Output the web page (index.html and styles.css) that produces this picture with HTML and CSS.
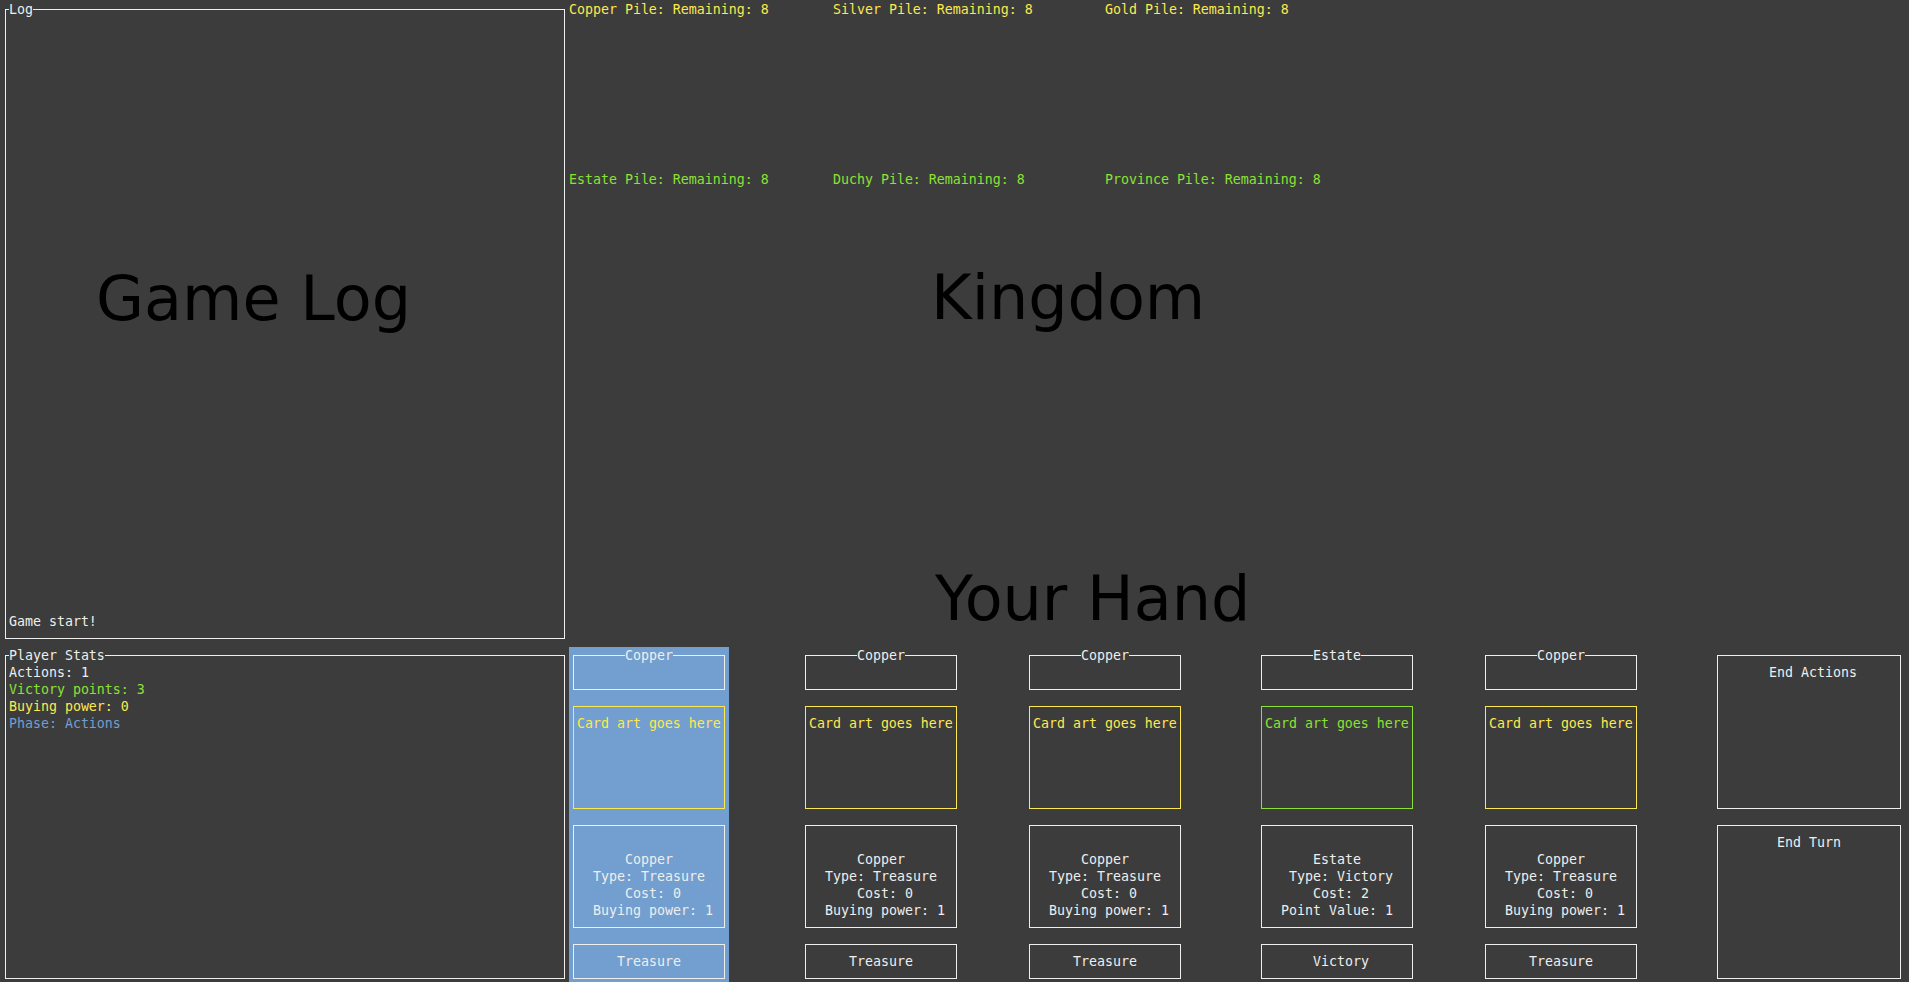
FILE: index.html
```html
<!DOCTYPE html>
<html lang="en">
<head>
<meta charset="utf-8">
<title>Dominion</title>
<link rel="stylesheet" href="styles.css">
</head>
<body>
<div class="screen">
  <fieldset class="panel log">
    <legend>Log</legend>
    <div class="line">Game start!</div>
  </fieldset>

  <section class="kingdom">
    <div class="pile treasure">Copper Pile: Remaining: 8</div>
    <div class="pile treasure">Silver Pile: Remaining: 8</div>
    <div class="pile treasure">Gold Pile: Remaining: 8</div>
    <div class="pile victory">Estate Pile: Remaining: 8</div>
    <div class="pile victory">Duchy Pile: Remaining: 8</div>
    <div class="pile victory">Province Pile: Remaining: 8</div>
  </section>

  <fieldset class="panel stats">
    <legend>Player Stats</legend>
    <div class="line">Actions: 1</div>
    <div class="line c-green">Victory points: 3</div>
    <div class="line c-yellow">Buying power: 0</div>
    <div class="line c-blue">Phase: Actions</div>
  </fieldset>

  <section class="hand">
    <div class="slot">
      <div class="card selected">
        <fieldset class="card-title"><legend>Copper</legend></fieldset>
        <div class="card-art">Card art goes here</div>
        <div class="card-desc">
          <div class="line">Copper</div>
          <div class="line">Type: Treasure</div>
          <div class="line"> Cost: 0</div>
          <div class="line"> Buying power: 1</div>
        </div>
        <div class="card-type"><div class="line">Treasure</div></div>
      </div>
    </div>
    <div class="slot">
      <div class="card">
        <fieldset class="card-title"><legend>Copper</legend></fieldset>
        <div class="card-art">Card art goes here</div>
        <div class="card-desc">
          <div class="line">Copper</div>
          <div class="line">Type: Treasure</div>
          <div class="line"> Cost: 0</div>
          <div class="line"> Buying power: 1</div>
        </div>
        <div class="card-type"><div class="line">Treasure</div></div>
      </div>
    </div>
    <div class="slot">
      <div class="card">
        <fieldset class="card-title"><legend>Copper</legend></fieldset>
        <div class="card-art">Card art goes here</div>
        <div class="card-desc">
          <div class="line">Copper</div>
          <div class="line">Type: Treasure</div>
          <div class="line"> Cost: 0</div>
          <div class="line"> Buying power: 1</div>
        </div>
        <div class="card-type"><div class="line">Treasure</div></div>
      </div>
    </div>
    <div class="slot">
      <div class="card">
        <fieldset class="card-title"><legend>Estate</legend></fieldset>
        <div class="card-art victory">Card art goes here</div>
        <div class="card-desc">
          <div class="line">Estate</div>
          <div class="line"> Type: Victory</div>
          <div class="line"> Cost: 2</div>
          <div class="line">Point Value: 1</div>
        </div>
        <div class="card-type"><div class="line"> Victory</div></div>
      </div>
    </div>
    <div class="slot">
      <div class="card">
        <fieldset class="card-title"><legend>Copper</legend></fieldset>
        <div class="card-art">Card art goes here</div>
        <div class="card-desc">
          <div class="line">Copper</div>
          <div class="line">Type: Treasure</div>
          <div class="line"> Cost: 0</div>
          <div class="line"> Buying power: 1</div>
        </div>
        <div class="card-type"><div class="line">Treasure</div></div>
      </div>
    </div>
    <div class="actions">
      <div class="btn"><div class="line"> End Actions</div></div>
      <div class="btn"><div class="line">End Turn</div></div>
    </div>
  </section>

  <div class="big big-log">Game Log</div>
  <div class="big big-kingdom">Kingdom</div>
  <div class="big big-hand">Your Hand</div>
</div>
</body>
</html>
```
FILE: styles.css
```css
html, body {
  margin: 0;
  height: 100%;
  background: #3c3c3c;
  overflow: hidden;
}

body {
  font-family: "DejaVu Sans Mono", "Liberation Mono", monospace;
  font-size: 13.28px;
  line-height: 17px;
  color: #eeeeec;
}

.screen {
  position: relative;
  display: grid;
  grid-template-columns: 568px 1336px;
  grid-template-rows: 646px 340px;
  padding: 1px 0 0 1px;
}

.line {
  white-space: pre;
}

.c-green { color: #8ae234; }
.c-yellow { color: #fce94f; }
.c-blue { color: #729fcf; }

/* framed panels with a title in the top border */
.panel {
  margin: 0 4px 8px;
  padding: 0 3px 8px;
  border: 1px solid #eeeeec;
  min-width: 0;
}

.panel legend {
  padding: 0;
  margin: 0;
  line-height: 17px;
}

.log {
  display: flex;
  flex-direction: column;
  justify-content: flex-end;
}

/* kingdom supply piles */
.kingdom {
  display: grid;
  grid-template-columns: 264px 272px 1fr;
  grid-template-rows: 170px 170px;
  align-content: start;
}

.pile {
  white-space: pre;
}

.pile.treasure { color: #fce94f; }
.pile.victory { color: #8ae234; }

/* hand */
.hand {
  display: grid;
  grid-template-columns: 232px 224px 232px 224px 232px 192px;
}

.card {
  width: 160px;
  height: 340px;
  display: grid;
  grid-template-rows: 51px 119px 119px 51px;
}

.card.selected {
  background: #729fcf;
}

.card-title {
  margin: 0 4px 8px;
  padding: 0 3px;
  border: 1px solid #eeeeec;
  min-width: 0;
}

.card-title legend {
  margin: 0 auto;
  padding: 0;
  line-height: 17px;
}

.card-art {
  margin: 8px 4px;
  padding: 8px 3px 0;
  border: 1px solid #fce94f;
  color: #fce94f;
  white-space: nowrap;
  overflow: hidden;
}

.card-art.victory {
  border-color: #8ae234;
  color: #8ae234;
}

.card-desc {
  margin: 8px 4px;
  padding: 25px 3px 0;
  border: 1px solid #eeeeec;
  text-align: center;
}

.card-type {
  margin: 8px 4px;
  padding: 8px 3px 0;
  border: 1px solid #eeeeec;
  text-align: center;
}

.actions {
  display: grid;
  grid-template-rows: 170px 170px;
}

.btn {
  margin: 8px 4px;
  padding: 8px 3px 0;
  border: 1px solid #eeeeec;
  text-align: center;
}

/* large placeholder captions drawn over the panels */
.big {
  position: absolute;
  font-family: "DejaVu Sans", "Liberation Sans", sans-serif;
  font-size: 62px;
  line-height: 1;
  color: #000;
  white-space: nowrap;
}

.big-log { left: 96px; top: 268px; }
.big-kingdom { left: 931px; top: 267px; }
.big-hand { left: 935px; top: 568px; }
```
